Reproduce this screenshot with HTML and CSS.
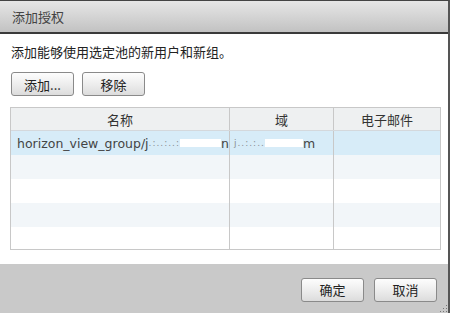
FILE: index.html
```html
<!DOCTYPE html>
<html lang="zh">
<head>
<meta charset="utf-8">
<link rel="stylesheet" href="styles.css">
</head>
<body>
<div class="dialog">
  <div class="titlebar">添加授权</div>
  <div class="content">
    <p class="desc">添加能够使用选定池的新用户和新组。</p>
    <div class="toolbar">
      <button class="btn">添加...</button>
      <button class="btn">移除</button>
    </div>
    <div class="grid">
      <div class="row head">
        <div class="cell c1">名称</div>
        <div class="cell c2">域</div>
        <div class="cell c3">电子邮件</div>
      </div>
      <div class="row sel">
        <div class="cell c1 txt">horizon_view_group/j<span class="blur">.:..:..:</span><span class="blank"></span>n</div>
        <div class="cell c2 txt"><span class="blur">j..:.:..</span><span class="blank2"></span>m</div>
        <div class="cell c3"></div>
      </div>
      <div class="row alt"><div class="cell c1"></div><div class="cell c2"></div><div class="cell c3"></div></div>
      <div class="row"><div class="cell c1"></div><div class="cell c2"></div><div class="cell c3"></div></div>
      <div class="row alt"><div class="cell c1"></div><div class="cell c2"></div><div class="cell c3"></div></div>
      <div class="row last"><div class="cell c1"></div><div class="cell c2"></div><div class="cell c3"></div></div>
    </div>
  </div>
  <div class="footer">
    <button class="btn fbtn">确定</button>
    <button class="btn fbtn">取消</button>
    <div class="grip"></div>
  </div>
</div>
</body>
</html>
```
FILE: styles.css
```css
* { box-sizing: border-box; }
html, body { margin: 0; padding: 0; }
body {
  width: 450px; height: 313px; overflow: hidden;
  font-family: "Noto Sans CJK SC", "DejaVu Sans", sans-serif;
  font-size: 13px; color: #222; background: #fff;
}
.dialog {
  width: 450px; height: 313px;
  display: flex; flex-direction: column;
  border-right: 2px solid #555;
  border-top: 1px solid #444;
  position: relative;
}
.titlebar {
  height: 33px;
  padding-left: 12px;
  display: flex; align-items: center;
  background: linear-gradient(#e6e6e6, #d6d6d6 45%, #c2c2c2);
  border-bottom: 2px solid #3a3a3a;
  color: #444; font-size: 13px;
}
.content {
  flex: 1;
  padding: 0 8px 0 10px;
  display: flex; flex-direction: column;
}
.desc { margin: 8px 0 0 1px; height: 20px; line-height: 20px; }
.toolbar { display: flex; gap: 8px; margin-top: 10px; padding-left: 1px; }
.btn {
  font-family: "Noto Sans CJK SC", sans-serif;
  font-size: 13px; color: #222;
  width: 63px; height: 24px; padding: 0;
  border: 1px solid #8a8a8a; border-radius: 3px;
  background: linear-gradient(#fdfdfd, #ececec 55%, #dcdcdc);
}
.grid {
  margin-top: 11px;
  width: 431px;
  border: 1px solid #c8c8c8;
}
.row { display: flex; height: 24px; background: #fff; }
.row.head { height: 23px; background: #eef0f1; border-bottom: 1px solid #d4d8dc; }
.row.sel { background: #d7ecf8; }
.row.alt { background: #f2f6f9; }
.row.last { height: 22px; }
.cell { height: 100%; display: flex; align-items: center; justify-content: center; overflow: hidden; white-space: nowrap; }
.c1 { width: 219px; border-right: 1px solid #c8c8c8; }
.c2 { width: 104px; border-right: 1px solid #c8c8c8; }
.c3 { flex: 1; }
.head .cell { color: #333; }
.txt { justify-content: flex-start; padding-left: 6px; font-family: "DejaVu Sans", sans-serif; font-size: 12.5px; color: #444; }
.blur { color: #8a8f94; font-size: 9px; letter-spacing: 1px; }
.blank { display: inline-block; width: 42px; height: 8px; background: #fff; }
.blank2 { display: inline-block; width: 38px; height: 8px; background: #fff; }
.c2.txt { padding-left: 4px; }
.footer {
  margin-top: auto;
  height: 49px;
  background: #c9c9c9;
  display: flex; justify-content: flex-end; align-items: center;
  gap: 10px; padding-right: 11px; padding-top: 2px;
  position: relative;
}
.grip {
  position: absolute; right: 1px; bottom: 1px; width: 8px; height: 8px;
  background-image: radial-gradient(circle, #777 0.8px, transparent 1px);
  background-size: 3px 3px;
  clip-path: polygon(100% 0, 100% 100%, 0 100%);
}
```
